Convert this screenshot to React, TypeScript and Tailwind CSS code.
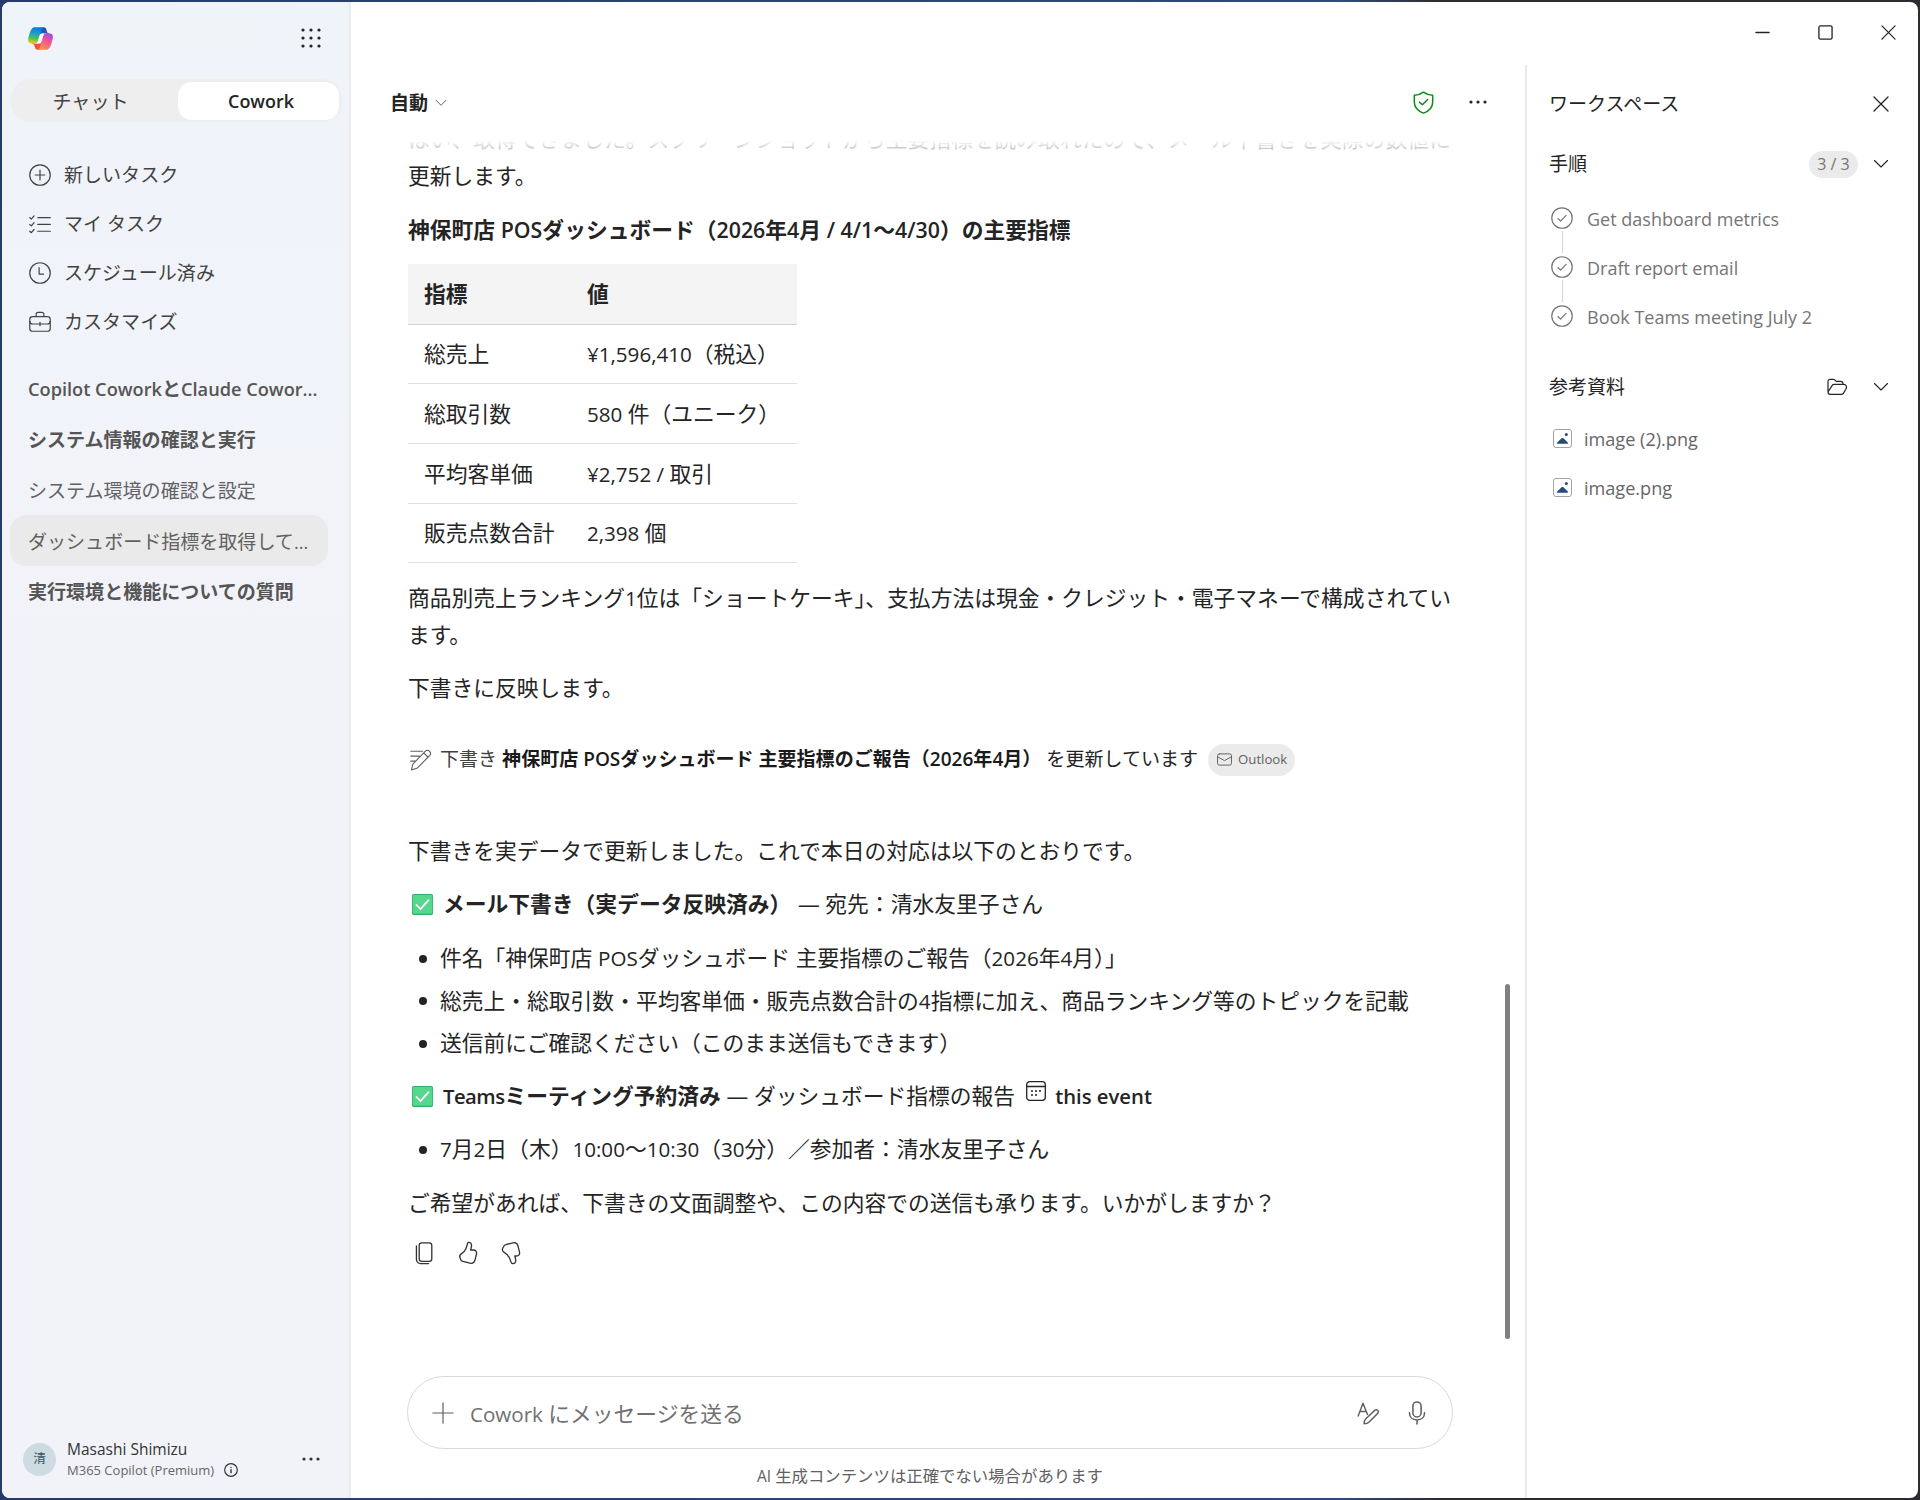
import type { ReactNode, SVGProps } from "react";

type IconProps = SVGProps<SVGSVGElement>;

function Icon({ children, ...rest }: IconProps) {
  return (
    <svg aria-hidden="true" fill="none" stroke="currentColor" strokeLinecap="round" strokeLinejoin="round" strokeWidth={1.1} viewBox="0 0 20 20" {...rest}>
      {children}
    </svg>
  );
}

function CopilotLogo() {
  return (
    <svg aria-hidden="true" className="h-[27px] w-[27px]" fill="none" viewBox="0 0 48 48">
      <defs>
        <linearGradient gradientUnits="userSpaceOnUse" id="cool" x1="16" x2="12" y1="5" y2="33">
          <stop stopColor="#0d78e0" />
          <stop offset="0.4" stopColor="#1fa3c4" />
          <stop offset="0.7" stopColor="#5cc04a" />
          <stop offset="1" stopColor="#f8cf1c" />
        </linearGradient>
        <linearGradient gradientUnits="userSpaceOnUse" id="warm" x1="40" x2="24" y1="14" y2="44">
          <stop stopColor="#a545e8" />
          <stop offset="0.45" stopColor="#f0568f" />
          <stop offset="1" stopColor="#fb9a4b" />
        </linearGradient>
        <linearGradient gradientUnits="userSpaceOnUse" id="navy" x1="24" x2="38" y1="16" y2="6">
          <stop stopColor="#2a5fd6" />
          <stop offset="1" stopColor="#1448b5" />
        </linearGradient>
      </defs>
      <path d="M34.142 7.325A4.63 4.63 0 0 0 29.7 4H28.35a4.63 4.63 0 0 0-4.554 3.794L21.48 20.407l.575-1.965a4.63 4.63 0 0 1 4.444-3.33h7.853l3.294 1.282 3.175-1.283h-.926a4.63 4.63 0 0 1-4.443-3.325l-1.31-4.461Z" fill="url(#navy)" />
      <path d="M14.33 40.656A4.63 4.63 0 0 0 18.779 44h2.87a4.63 4.63 0 0 0 4.629-4.51l.312-12.163-.654 2.233a4.63 4.63 0 0 1-4.443 3.329h-7.919l-2.823-1.532-3.057 1.532h.912a4.63 4.63 0 0 1 4.447 3.344l1.279 4.423Z" fill="#f0513c" />
      <path d="M29.5 4H13.46c-4.583 0-7.332 6.057-9.165 12.113C2.123 23.29-.72 32.885 7.503 32.885h6.925a4.63 4.63 0 0 0 4.456-3.358c1.438-4.96 3.918-13.48 5.87-19.92C25.743 6.337 26.56 4 29.5 4Z" fill="url(#cool)" />
      <path d="M18.498 44h16.04c4.582 0 7.332-6.058 9.165-12.115 2.172-7.177 5.013-16.775-3.208-16.775h-6.926a4.63 4.63 0 0 0-4.456 3.358c-1.438 4.96-3.918 13.485-5.87 19.925C22.257 41.66 21.438 44 18.498 44Z" fill="url(#warm)" />
      <path d="M27.8 15.3h4.2c-2.4.6-3.7 2.2-4.4 4.6l-2.7 8.8c-.8 2.5-2.3 4-5.2 4h-3.8c2.4-.5 3.7-2 4.4-4.3l2.7-8.8c.8-2.5 2-3.900 4.800-4.300Z" fill="#fff" />
    </svg>
  );
}

function AppGridIcon() {
  const offsets = [2, 10, 18];
  return (
    <svg aria-hidden="true" className="h-5 w-5" fill="#242424" viewBox="0 0 20 20">
      {offsets.map((y) => offsets.map((x) => <circle cx={x} cy={y} key={`${x}-${y}`} r={1.6} />))}
    </svg>
  );
}

function MoreIcon({ className }: { className?: string }) {
  return (
    <svg aria-hidden="true" className={className} fill="currentColor" viewBox="0 0 18 4">
      <circle cx={2} cy={2} r={1.6} />
      <circle cx={9} cy={2} r={1.6} />
      <circle cx={16} cy={2} r={1.6} />
    </svg>
  );
}

function ChevronIcon({ className }: { className?: string }) {
  return (
    <Icon className={className} viewBox="0 0 16 16">
      <path d="M1.5 4.5 8 11l6.5-6.5" />
    </Icon>
  );
}

function CloseIcon({ className }: { className?: string }) {
  return (
    <Icon className={className} strokeWidth={1.3} viewBox="0 0 16 16">
      <path d="m1 1 14 14M15 1 1 15" />
    </Icon>
  );
}

// Latin runs are set a touch smaller so their x-height sits right beside the kana.
function Mixed({ children, latin = "text-[0.945em]" }: { children: string; latin?: string }) {
  return (
    <>
      {children.split(/([\x21-\x7e¥][\x20-\x7e¥]*)/).map((run, index) =>
        index % 2 === 1 ? (
          <span className={`leading-none ${latin}`} key={index}>
            {run}
          </span>
        ) : (
          run
        ),
      )}
    </>
  );
}

const navItems: { icon: ReactNode; label: string }[] = [
  {
    label: "新しいタスク",
    icon: (
      <>
        <circle cx={10} cy={10} r={9.3} />
        <path d="M10 5.6v8.8M5.6 10h8.8" />
      </>
    ),
  },
  {
    label: "マイ タスク",
    icon: <path d="M8 4.2h11.4M8 10.4h11.4M8 16.6h11.4M.7 4.2l1.4 1.3L4.6 2.6M.7 10.4l1.4 1.3 2.5-2.9M.7 16.6l1.4 1.3L4.6 15" />,
  },
  {
    label: "スケジュール済み",
    icon: (
      <>
        <circle cx={10} cy={10} r={9.3} />
        <path d="M9.2 5v6h4" />
      </>
    ),
  },
  {
    label: "カスタマイズ",
    icon: (
      <>
        <rect height={13.2} rx={2.6} width={18.6} x={0.7} y={5.2} />
        <path d="M6.5 5V3a1.8 1.8 0 0 1 1.8-1.8h3.4A1.8 1.8 0 0 1 13.5 3v2M.7 9.3c0 1.6 1 2.500 2.500 2.500h13.600c1.500 0 2.500-.9 2.500-2.500M10 10.300v3" />
      </>
    ),
  },
];

const conversations = [
  { label: "Copilot CoworkとClaude Cowor...", unread: true },
  { label: "システム情報の確認と実行", unread: true },
  { label: "システム環境の確認と設定" },
  { label: "ダッシュボード指標を取得して...", active: true },
  { label: "実行環境と機能についての質問", unread: true },
];

const metrics = [
  ["総売上", "¥1,596,410（税込）"],
  ["総取引数", "580 件（ユニーク）"],
  ["平均客単価", "¥2,752 / 取引"],
  ["販売点数合計", "2,398 個"],
];

const steps = ["Get dashboard metrics", "Draft report email", "Book Teams meeting July 2"];
const files = ["image (2).png", "image.png"];

function Sidebar() {
  return (
    <aside className="flex w-[349px] shrink-0 flex-col border-r-2 border-[#ebebee] bg-linear-to-b from-[#eff4f9] to-[#f2f3f9] to-45%">
      <div className="flex h-[72px] items-center justify-between pr-[28px] pl-[25px]">
        <CopilotLogo />
        <AppGridIcon />
      </div>
      <div className="mt-[5px] ml-[9px] flex h-[43px] w-[331px] items-center rounded-[20px] bg-[#eeeeee] p-[3px]">
        <span className="flex-1 pt-[3px] pr-[11px] text-center text-[19.05px] text-[#424242]">チャット</span>
        <span className="flex h-[38px] w-[161px] items-center justify-center rounded-[14px] bg-white pt-[3px] pl-[5px] text-[19px] font-semibold text-[#242424]">
          <Mixed>Cowork</Mixed>
        </span>
      </div>
      <nav className="mt-[28px] flex flex-col">
        {navItems.map((item) => (
          <a className="flex h-[49px] items-center gap-[13px] pl-[27px] text-[19.05px] text-[#424242]" key={item.label}>
            <Icon className="h-[22px] w-[22px] shrink-0">{item.icon}</Icon>
            <span className="pt-[2px]">{item.label}</span>
          </a>
        ))}
      </nav>
      <div className="mt-[17px] flex flex-col pl-2">
        {conversations.map((item) => (
          <a
            className={`flex h-[50.8px] w-[318px] items-center rounded-2xl pt-[2px] pl-[18px] text-[19.05px] whitespace-nowrap ${item.active ? "bg-[#eaeaea]" : ""} ${item.unread ? "font-semibold text-[#555]" : "text-[#616161]"}`}
            key={item.label}
          >
            <span>
              <Mixed latin="text-[0.955em]">{item.label}</Mixed>
            </span>
          </a>
        ))}
      </div>
      <div className="mt-auto mb-[18px] flex items-center pl-[21px]">
        <span className="flex h-[33px] w-[33px] items-center justify-center rounded-full bg-[#cfdbe2] text-[12.5px] text-[#33555c]">清</span>
        <div className="ml-[11px] flex flex-col whitespace-nowrap">
          <span className="text-[15.5px] leading-[22px] text-[#333]">Masashi Shimizu</span>
          <span className="flex items-center gap-[10px] text-[13px] leading-5 text-[#666]">
            M365 Copilot (Premium)
            <Icon className="h-[14px] w-[14px] text-[#333]" strokeWidth={1.7}>
              <circle cx={10} cy={10} r={9} />
              <path d="M10 9.5V14M10 6.2v.2" strokeWidth={2} />
            </Icon>
          </span>
        </div>
        <MoreIcon className="mr-[29px] ml-auto h-1 w-[18px] text-[#333]" />
      </div>
    </aside>
  );
}

function CheckEmoji() {
  return (
    <svg aria-hidden="true" className="mr-[10px] ml-1 inline-block h-[21px] w-[21px] align-[-3px]" viewBox="0 0 21 21">
      <rect fill="#36ab6b" height={21} rx={1.8} width={21} />
      <rect fill="#55d78d" height={18.8} rx={1.4} width={19.6} x={0.7} y={1} />
      <path d="m4.5 11 4 4.2 8-9" fill="none" stroke="#fff" strokeLinecap="round" strokeWidth={1.8} />
    </svg>
  );
}

function Bullet({ children }: { children: string }) {
  return (
    <li className="flex items-center gap-[13px] pl-[11px] leading-[37px]">
      <span className="mt-[2px] h-2 w-2 shrink-0 rounded-full bg-[#242424]" />
      <span>
        <Mixed>{children}</Mixed>
      </span>
    </li>
  );
}

function Conversation() {
  return (
    <div className="flex flex-col pl-[57px] text-[21.78px] leading-[37px] whitespace-nowrap text-[#242424]">
      <div className="relative h-[60px]">
        <p className="-mt-[13px]">
          はい、取得できました。スクリーンショットから主要指標を読み取れたので、メール下書きを実際の数値に
          <br />
          更新します。
        </p>
        <div className="absolute inset-x-0 -top-[13px] h-[34px] bg-linear-to-b from-white from-60% to-white/60" />
      </div>
      <h2 className="mt-[18px] font-bold">
        <Mixed latin="text-[0.98em] font-semibold">神保町店 POSダッシュボード（2026年4月 / 4/1〜4/30）の主要指標</Mixed>
      </h2>
      <table className="mt-4 w-[389px] border-collapse text-left">
        <thead>
          <tr className="h-[60px] border-b border-[#d1d1d1] bg-[#f4f4f4]">
            <th className="w-[163px] pl-4 font-bold">指標</th>
            <th className="pl-4 font-bold">値</th>
          </tr>
        </thead>
        <tbody>
          {metrics.map(([name, value]) => (
            <tr className="h-[59.7px] border-b border-[#e0e0e0]" key={name}>
              <td className="pl-4">{name}</td>
              <td className="pl-4">
                <Mixed>{value}</Mixed>
              </td>
            </tr>
          ))}
        </tbody>
      </table>
      <p className="mt-[16px]">
        <Mixed>商品別売上ランキング1位は「ショートケーキ」、支払方法は現金・クレジット・電子マネーで構成されてい</Mixed>
        <br />
        ます。
      </p>
      <p className="mt-[16px]">下書きに反映します。</p>

      <div className="mt-[37px] flex h-[33px] items-center text-[19.05px] text-[#424242]">
        <Icon className="mr-[8px] ml-[2px] h-[22px] w-[22px] text-[#616161]" strokeWidth={1}>
          <path d="M.7 2h10.8M.7 6.5h7.800M.7 11h4.500M13.800 2.100c1.200-1.200 2.900-1.200 4 0s1.100 2.900 0 4L7 16.900c-.4.4-.8.7-1.400.8L1.300 19l1.100-4.500c.1-.5.400-1 .8-1.400ZM12.500 3.500l4 4" />
        </Icon>
        <span>下書き</span>
        <span className="ml-[5px] font-bold text-[#1a1a1a]">
          <Mixed latin="font-semibold">神保町店 POSダッシュボード 主要指標のご報告（2026年4月）</Mixed>
        </span>
        <span className="ml-[5px] text-[#242424]">を更新しています</span>
        <span className="ml-[10px] flex h-8 w-[87px] items-center gap-[6px] rounded-full bg-[#ebebeb] pl-[9px] text-[13.2px] text-[#616161]">
          <Icon className="h-[15px] w-[15px]" strokeWidth={1.3}>
            <rect height={15} rx={2.5} width={18.6} x={0.7} y={2.5} />
            <path d="m1 6.5 9 5 9-5" />
          </Icon>
          Outlook
        </span>
      </div>

      <p className="mt-[56px]">下書きを実データで更新しました。これで本日の対応は以下のとおりです。</p>
      <p className="mt-[16px]">
        <CheckEmoji />
        <strong className="mr-[1px]">メール下書き（実データ反映済み）</strong>
        <Mixed> — 宛先：清水友里子さん</Mixed>
      </p>
      <ul className="mt-[17px] flex flex-col gap-[5.5px]">
        <Bullet>件名「神保町店 POSダッシュボード 主要指標のご報告（2026年4月）」</Bullet>
        <Bullet>総売上・総取引数・平均客単価・販売点数合計の4指標に加え、商品ランキング等のトピックを記載</Bullet>
        <Bullet>送信前にご確認ください（このまま送信もできます）</Bullet>
      </ul>
      <p className="mt-[16px] h-[37px]">
        <CheckEmoji />
        <strong>
          <Mixed latin="text-[0.93em] font-semibold tracking-tight">Teamsミーティング予約済み</Mixed>
        </strong>
        <Mixed> — ダッシュボード指標の報告</Mixed>
        <Icon className="mr-[9px] ml-[11px] inline-block h-5 w-5 align-[3px]" strokeWidth={1.3}>
          <rect height={18.6} rx={3} width={18.6} x={0.7} y={0.7} />
          <path d="M1 5.5h18" />
          <path d="M10 10v.1M14 10v.1M6 14v.1M10 14v.1M6 10v.1" strokeWidth={2} />
        </Icon>
        <span className="text-[20.3px] leading-none font-semibold">this event</span>
      </p>
      <ul className="mt-[16px]">
        <Bullet>7月2日（木）10:00〜10:30（30分）／参加者：清水友里子さん</Bullet>
      </ul>
      <p className="mt-[17px]">ご希望があれば、下書きの文面調整や、この内容での送信も承ります。いかがしますか？</p>
      <div className="mt-[20px] flex items-center gap-[19.5px] pl-[4px] text-[#333]">
        <Icon className="h-6 w-6">
          <rect height={15.5} rx={2.2} width={10.5} x={6} y={1.5} />
          <path d="M3.7 4v11.5A3.3 3.3 0 0 0 7 18.800h6.800" />
        </Icon>
        <Icon className="h-6 w-6">
          <path d="M10.5 1.2c1.7-.2 2.7 1.2 2.4 3.2l-.7 3.1h2.3c1.9 0 3 1.5 2.6 3.200l-1.300 5.200c-.5 2-2.200 3-4.200 2.600L5.800 17c-1-.2-1.700-.8-2-1.800l-.5-1.500c-.5-1.500 0-2.500 1.300-3.200 1.800-1 2.900-2.200 3.700-4.300.6-1.500 1.100-2.800 1.300-4.200.1-.4.400-.7.9-.8Z" />
        </Icon>
        <Icon className="h-6 w-6">
          <path d="M11.5 18.800c1.700.2 2.700-1.200 2.400-3.200l-.7-3.100h1.300c1.900 0 3-1.500 2.600-3.200l-1.300-5.200c-.5-2-2.200-3-4.200-2.600L5.800 3c-1 .2-1.700.8-2 1.800l-.8 1.500c-.5 1.500 0 2.500 1.300 3.200 1.800 1 3.200 2.200 4.200 4.300.7 1.500 1.300 2.800 1.700 4.200.1.400.8.700 1.300.8Z" />
        </Icon>
      </div>
    </div>
  );
}

function Composer() {
  return (
    <div className="mt-auto flex flex-col items-center pr-[16px] pb-[9px]">
      <div className="flex h-[73px] w-[1046px] items-center rounded-full border border-[#d9d9d9] pr-[23px] pl-[24px] text-[#616161]">
        <Icon className="h-[22px] w-[22px]">
          <path d="M10 .8v18.4M.8 10h18.4" />
        </Icon>
        <span className="ml-[16px] pt-[3px] text-[21.78px] text-[#707070]">
          <Mixed>Cowork にメッセージを送る</Mixed>
        </span>
        <Icon className="mr-[25px] ml-auto h-6 w-6" strokeWidth={1.2}>
          <path d="M1.8 12.5 5.8 1.8l3.8 9.5M3.2 8.7h5.3M15.8 7.6a1.8 1.8 0 0 1 2.5 2.5l-7.6 7.600c-.8.800-2.400 1.200-4 1.300.1-1.600.5-3.200 1.300-4Z" />
        </Icon>
        <Icon className="h-6 w-6" strokeWidth={1.3}>
          <rect height={12.5} rx={3.4} width={6.8} x={6.6} y={0.8} />
          <path d="M3.7 9.8c0 3.7 2.6 6 6.3 6s6.3-2.3 6.3-6M10 16v3.2" />
        </Icon>
      </div>
      <span className="mt-[14px] text-[16.4px] leading-[26px] text-[#616161]">
        <Mixed>AI 生成コンテンツは正確でない場合があります</Mixed>
      </span>
    </div>
  );
}

function Workspace() {
  return (
    <aside className="flex w-[393px] shrink-0 flex-col border-l-2 border-[#ebebeb] pt-[20px] pr-[27px] pl-[22px] text-[19.05px] text-[#242424]">
      <div className="flex h-[38px] items-center justify-between">
        <h2 className="pt-[1px]">ワークスペース</h2>
        <CloseIcon className="mr-[2px] h-4 w-4" />
      </div>
      <div className="mt-[22px] flex h-[38px] items-center">
        <h3 className="mr-auto pt-[1px]">手順</h3>
        <span className="mr-[15px] flex h-[27px] w-[49px] items-center justify-center rounded-full bg-[#ebebeb] text-[16px] text-[#757575]">3 / 3</span>
        <ChevronIcon className="mr-[2px] h-4 w-4" />
      </div>
      <ol className="mt-[10px] flex flex-col pl-[2px]">
        {steps.map((step, index) => (
          <li className="relative flex h-[49px] items-center gap-[14px] text-[18px] text-[#757575]" key={step}>
            <Icon className="h-[22px] w-[22px] shrink-0" strokeWidth={1.1}>
              <circle cx={10} cy={10} r={9.3} />
              <path d="m6.3 10.5 2.4 2.3 5-5.2" />
            </Icon>
            <span className="pt-[3px]">{step}</span>
            {index < steps.length - 1 ? <span className="absolute top-[38px] left-[11px] h-[22px] w-px bg-[#d6d6d6]" /> : null}
          </li>
        ))}
      </ol>
      <div className="mt-[28px] flex h-[38px] items-center">
        <h3 className="mr-auto pt-[1px]">参考資料</h3>
        <Icon className="mr-[26px] h-5 w-5" strokeWidth={1.2}>
          <path d="M1 15V4.5a2.200 2.200 0 0 1 2.200-2.200h3c.6 0 1.100.2 1.500.6l1.500 1.500h4.600A2.200 2.200 0 0 1 16 6.600v.8M1 15c0 1.400 1 2.400 2.300 2.400h11.200c.8 0 1.400-.3 1.900-1l2.400-4.200c1.300-2.400.4-4.800-2-4.800H7.200c-.9 0-1.600.4-2.100 1.200Z" />
        </Icon>
        <ChevronIcon className="mr-[2px] h-4 w-4" />
      </div>
      <ul className="mt-[8px] flex flex-col">
        {files.map((file) => (
          <li className="flex h-[49px] items-center gap-[12px] pl-[4px] text-[18.1px] text-[#666]" key={file}>
            <svg aria-hidden="true" className="h-[19px] w-[19px]" fill="none" viewBox="0 0 19 19">
              <rect height={18} rx={2.5} stroke="#a3a3a3" width={18} x={0.5} y={0.5} />
              <path d="M4.5 14.8c-.6 0-.7-.8-.3-1.200L8.600 9.300c.5-.5 1.300-.5 1.800 0l4.400 4.300c.4.400.3 1.200-.3 1.200Z" fill="#264a78" />
              <circle cx={13.3} cy={5.4} fill="#264a78" r={1.5} />
            </svg>
            <span className="pt-[2px]">{file}</span>
          </li>
        ))}
      </ul>
    </aside>
  );
}

export default function App() {
  return (
    <div
      className="h-[1500px] w-[1920px] overflow-hidden bg-linear-to-r from-[#263b6b] via-[#2f4a7d] via-70% to-[#2c2c30] to-75% p-[2px] font-['Open_Sans','Noto_Sans_CJK_JP',sans-serif]"
      lang="ja"
    >
      <div className="flex h-full overflow-hidden rounded-lg bg-white">
        <Sidebar />
        <div className="flex min-w-0 flex-1 flex-col">
          <header className="flex h-[63px] shrink-0 items-start justify-end gap-[48px] pt-[23px] pr-[22px] text-[#242424]">
            <Icon className="h-[15px] w-[15px]" strokeWidth={1.4} viewBox="0 0 16 16">
              <path d="M1 8h14" />
            </Icon>
            <Icon className="h-[15px] w-[15px]" strokeWidth={1.4} viewBox="0 0 16 16">
              <rect height={14} rx={1.5} width={14} x={1} y={1} />
            </Icon>
            <CloseIcon className="h-[15px] w-[15px]" />
          </header>
          <div className="flex min-h-0 flex-1">
            <main className="relative flex flex-1 flex-col">
              <div className="flex h-[68px] shrink-0 items-center pt-[8px] pr-[38px] pl-[39px] text-[#242424]">
                <span className="text-[19.05px] font-bold">自動</span>
                <ChevronIcon className="ml-[7px] h-3 w-3 text-[#424242]" />
                <Icon className="mr-[34px] mb-[2px] ml-auto h-[23px] w-[23px] text-[#0e8a16]" strokeWidth={1.3}>
                  <path d="M10 1c2.2 1.7 4.9 2.5 8 2.7v5.800c0 4.700-2.800 7.800-8 9.700-5.200-1.900-8-5-8-9.700V3.700C5.100 3.500 7.800 2.700 10 1Z" />
                  <path d="m6.5 9.7 2.5 2.3 4.700-4.600" />
                </Icon>
                <MoreIcon className="mb-[3px] h-1 w-[18px]" />
              </div>
              <Conversation />
              <Composer />
              <div className="absolute top-[919px] right-[15px] h-[355px] w-[5px] rounded-full bg-[#808080]" />
            </main>
            <Workspace />
          </div>
        </div>
      </div>
    </div>
  );
}
